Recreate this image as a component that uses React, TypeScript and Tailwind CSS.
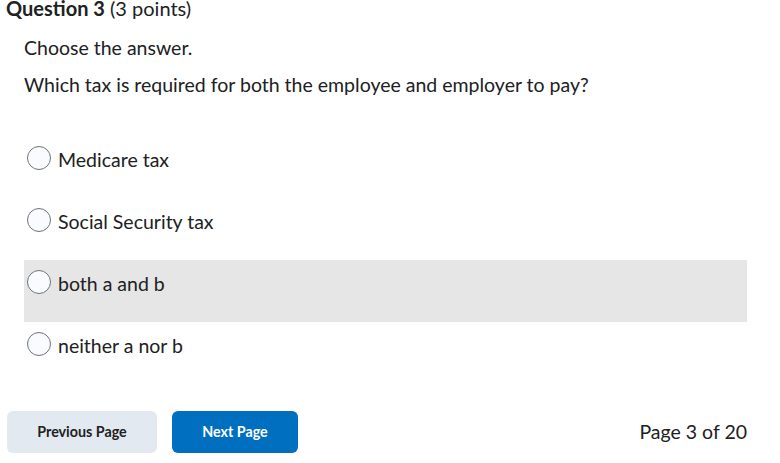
import React from 'react';

// --- DATA --- //

const OPTIONS = [
    { label: 'Medicare tax', highlighted: false },
    { label: 'Social Security tax', highlighted: false },
    { label: 'both a and b', highlighted: true },
    { label: 'neither a nor b', highlighted: false },
];

// --- SUB-COMPONENTS --- //

const RadioOption: React.FC<{ label: string; highlighted: boolean }> = ({ label, highlighted }) => (
    <label
        className={`flex items-start gap-[7px] h-[62px] pt-[10px] pl-[3px] cursor-pointer ${highlighted ? 'bg-[#e6e6e6]' : ''}`}
    >
        <span className="w-[24px] h-[24px] rounded-full border border-[#6e7477] bg-[#f9fbff] flex-shrink-0" />
        <span className="pt-[1px] text-[19.5px] leading-[26px] text-[#202122]">{label}</span>
    </label>
);

// --- MAIN COMPONENT --- //

export default function App() {
    return (
        <div className="w-[780px] h-[463px] bg-white overflow-hidden" style={{ fontFamily: 'Lato, "Noto Sans", sans-serif' }}>
            <h2 className="pl-[6px] text-[20px] leading-[16px] text-[#202122]">
                <span className="font-bold">Question 3</span> (3 points)
            </h2>
            <div className="pl-[24px] pr-[33px]">
                <p className="mt-[19px] text-[19.5px] leading-[26px] text-[#202122]">Choose the answer.</p>
                <p className="mt-[11px] text-[19.5px] leading-[26px] text-[#202122]">
                    Which tax is required for both the employee and employer to pay?
                </p>
                <div className="mt-[38px] flex flex-col">
                    {OPTIONS.map((o) => (
                        <RadioOption key={o.label} label={o.label} highlighted={o.highlighted} />
                    ))}
                </div>
            </div>
            <div className="mt-[27px] pl-[7px] pr-[33px] flex items-center">
                <button className="w-[150px] h-[42px] rounded-[6px] bg-[#e3e9f1] text-[14.3px] font-bold text-[#202122]">
                    Previous Page
                </button>
                <button className="ml-[15px] w-[126px] h-[42px] rounded-[6px] bg-[#006fbf] text-[14.3px] font-bold text-white">
                    Next Page
                </button>
                <span className="ml-auto text-[19.5px] text-[#202122]">Page 3 of 20</span>
            </div>
        </div>
    );
}
